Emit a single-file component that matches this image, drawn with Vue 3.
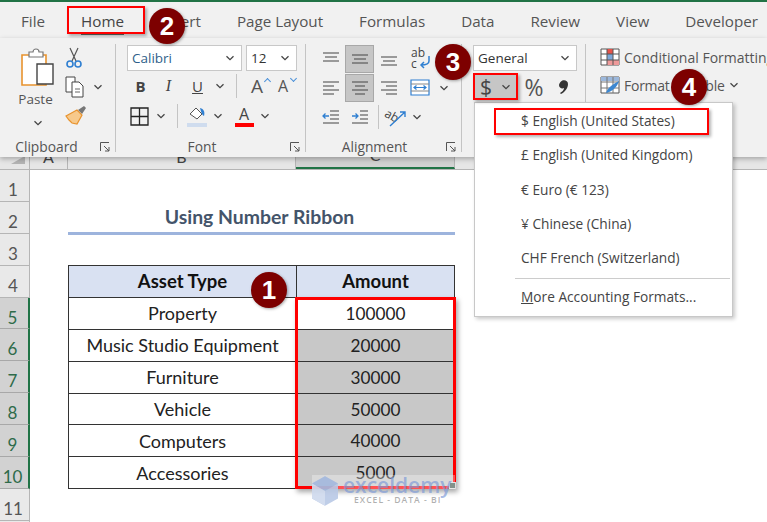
<script setup>
const tabs = ['File', 'Home', 'Insert', 'Page Layout', 'Formulas', 'Data', 'Review', 'View', 'Developer']
const rowNumbers = [1, 2, 3, 4, 5, 6, 7, 8, 9, 10, 11, 12]
const assets = [
  { type: 'Property', amount: 100000 },
  { type: 'Music Studio Equipment', amount: 20000 },
  { type: 'Furniture', amount: 30000 },
  { type: 'Vehicle', amount: 50000 },
  { type: 'Computers', amount: 40000 },
  { type: 'Accessories', amount: 5000 }
]
const currencies = [
  '$ English (United States)',
  '£ English (United Kingdom)',
  '€ Euro (€ 123)',
  '¥ Chinese (China)',
  'CHF French (Switzerland)'
]
</script>

<template>
  <div class="page">
    <svg class="defs" width="0" height="0">
      <symbol id="chev" viewBox="0 0 10 6">
        <path d="M1.5 1.2 5 4.6 8.5 1.2" fill="none" stroke="#444" stroke-width="1.3" />
      </symbol>
      <symbol id="launch" viewBox="0 0 10 10">
        <path d="M.5 9V.5H9M4 4l5 5M9 5v4H5" fill="none" stroke="#555" stroke-width="1" />
      </symbol>
    </svg>

    <div class="tabs">
      <div v-for="tab in tabs" :key="tab" class="tab" :class="{ active: tab === 'Home' }">{{ tab }}</div>
    </div>

    <div class="ribbon">
      <!-- clipboard -->
      <div class="group clipboard">
        <div class="group_body clip_body">
          <div class="paste">
            <svg width="36" height="40" viewBox="0 0 36 40">
              <path d="M2 8h24v30H2z" fill="#fff" stroke="#e8932e" stroke-width="1.6" />
              <path d="M9 9V5h4a3 3 0 0 1 6 0h4v5H9z" fill="#fff" stroke="#777" stroke-width="1.2" />
              <path d="M17 17h16v20H17z" fill="#fff" stroke="#444" stroke-width="1.4" />
            </svg>
            <div class="paste_text">Paste</div>
            <svg class="chev" width="10" height="6"><use href="#chev" /></svg>
          </div>
          <div class="clip_tools">
            <svg width="18" height="22" viewBox="0 0 18 22">
              <path d="M5 1l6 13M13 1L7 14" stroke="#555" stroke-width="1.2" fill="none" />
              <circle cx="5" cy="17" r="3" fill="none" stroke="#2f7fd1" stroke-width="1.6" />
              <circle cx="13" cy="17" r="3" fill="none" stroke="#2f7fd1" stroke-width="1.6" />
            </svg>
            <div class="tool_row">
              <svg width="22" height="22" viewBox="0 0 22 22">
                <path d="M1 1h9v15H1z" fill="#fff" stroke="#444" />
                <path d="M7 6h7l4 4v11H7z" fill="#fff" stroke="#444" />
                <path d="M10 13h5M10 16h5" stroke="#666" />
              </svg>
              <svg class="chev" width="10" height="6"><use href="#chev" /></svg>
            </div>
            <svg width="22" height="20" viewBox="0 0 22 20">
              <path d="M13 5l4 4 4-6-2-2z" fill="#777" />
              <path d="M1 11l11-6 5 5-5 9-5-1-3-3z" fill="#f7c98b" stroke="#e8932e" stroke-width="1.2" />
            </svg>
          </div>
        </div>
        <div class="group_label">
          <span>Clipboard</span>
          <svg class="launch" width="10" height="10"><use href="#launch" /></svg>
        </div>
      </div>

      <!-- font -->
      <div class="group font">
        <div class="group_body">
          <div class="select_row">
            <div class="select font_name"><span>Calibri</span><svg width="10" height="6"><use href="#chev" /></svg></div>
            <div class="select font_size"><span>12</span><svg width="10" height="6"><use href="#chev" /></svg></div>
          </div>
          <div class="font_row">
            <div class="cell w27 bold_b">B</div>
            <div class="cell w29 ital_i">I</div>
            <div class="cell w29 under_u">U</div>
            <div class="cell w16"><svg width="10" height="6"><use href="#chev" /></svg></div>
            <div class="cell w16"><span class="vsep"></span></div>
            <div class="cell w26 grow_a">A<i class="caret up"></i></div>
            <div class="cell w26 grow_a small_a">A<i class="caret down"></i></div>
          </div>
          <div class="font_row">
            <div class="cell w25">
              <svg width="19" height="19" viewBox="0 0 19 19">
                <path d="M1 1h17v17H1zM9.5 1v17M1 9.5h17" fill="none" stroke="#222" stroke-width="1.3" />
              </svg>
            </div>
            <div class="cell w18"><svg width="10" height="6"><use href="#chev" /></svg></div>
            <div class="cell w14"><span class="vsep"></span></div>
            <div class="cell w26">
              <svg width="21" height="21" viewBox="0 0 21 21">
                <path d="M3 8l6-6 6 6-5 5z" fill="#fff" stroke="#555" />
                <path d="M13 2c4 1 5 4 4 8-2-1-3-4-4-8z" fill="#2f7fd1" />
                <path d="M0 17h20v4H0z" fill="#cfdcee" />
              </svg>
            </div>
            <div class="cell w16"><svg width="10" height="6"><use href="#chev" /></svg></div>
            <div class="cell w6"></div>
            <div class="cell w24 color_a">A</div>
            <div class="cell w18"><svg width="10" height="6"><use href="#chev" /></svg></div>
          </div>
        </div>
        <div class="group_label">
          <span>Font</span>
          <svg class="launch" width="10" height="10"><use href="#launch" /></svg>
        </div>
      </div>

      <!-- alignment -->
      <div class="group alignment">
        <div class="group_body">
          <div class="align_row">
            <div class="acell"><svg width="18" height="14" viewBox="0 0 18 14"><path d="M1 1h16M3 5h12M1 9h16" stroke="#444" stroke-width="1.2" /></svg></div>
            <div class="acell on"><svg width="18" height="14" viewBox="0 0 18 14"><path d="M1 3h16M3 7h12M1 11h16" stroke="#444" stroke-width="1.2" /></svg></div>
            <div class="acell"><svg width="18" height="14" viewBox="0 0 18 14"><path d="M1 5h16M3 9h12M1 13h16" stroke="#444" stroke-width="1.2" /></svg></div>
            <div class="acell wide">
              <svg width="24" height="24" viewBox="0 0 24 24">
                <text x="3" y="10" class="svg_txt">ab</text>
                <text x="3" y="21" class="svg_txt">c</text>
                <path d="M21 9v5c0 3-3 4-8 4m3-3-3 3 3 3" fill="none" stroke="#2f7fd1" stroke-width="1.5" />
              </svg>
            </div>
          </div>
          <div class="align_row">
            <div class="acell"><svg width="18" height="16" viewBox="0 0 18 16"><path d="M1 2h16M1 6h11M1 10h16M1 14h11" stroke="#444" stroke-width="1.2" /></svg></div>
            <div class="acell on"><svg width="18" height="16" viewBox="0 0 18 16"><path d="M1 2h16M4 6h10M1 10h16M4 14h10" stroke="#444" stroke-width="1.2" /></svg></div>
            <div class="acell"><svg width="18" height="16" viewBox="0 0 18 16"><path d="M1 2h16M6 6h11M1 10h16M6 14h11" stroke="#444" stroke-width="1.2" /></svg></div>
            <div class="acell wide">
              <svg width="20" height="17" viewBox="0 0 20 17">
                <path d="M1 1h18v15H1z" fill="#fff" stroke="#2f7fd1" stroke-width="1.2" />
                <path d="M1 5h18M1 12h18" stroke="#888" />
                <path d="M4 8.5h12M6.500 6.500l-2.500 2 2.500 2M13.500 6.500l2.500 2-2.500 2" fill="none" stroke="#2f7fd1" stroke-width="1.2" />
              </svg>
            </div>
            <svg width="10" height="6"><use href="#chev" /></svg>
          </div>
          <div class="align_row">
            <div class="acell"><svg width="18" height="14" viewBox="0 0 18 14"><path d="M8 1h9M8 5h9M8 9h9M1 13h16" stroke="#444" stroke-width="1.1" /><path d="M1 6h6M3.5 3.5 1 6l2.5 2.5" fill="none" stroke="#2f7fd1" stroke-width="1.3" /></svg></div>
            <div class="acell"><svg width="18" height="14" viewBox="0 0 18 14"><path d="M9 1h8M9 5h8M9 9h8M1 13h16" stroke="#444" stroke-width="1.1" /><path d="M1 6h6M4.500 3.500 7 6 4.500 8.500" fill="none" stroke="#2f7fd1" stroke-width="1.3" /></svg></div>
            <div class="acell narrow"><span class="vsep"></span></div>
            <div class="acell orient">
              <svg width="24" height="20" viewBox="0 0 24 20">
                <text x="1" y="12" class="svg_txt" transform="rotate(30 6 8)">ab</text>
                <path d="M6 19 21 5m-5 0h5v5" fill="none" stroke="#2f7fd1" stroke-width="1.4" />
              </svg>
            </div>
            <svg width="10" height="6"><use href="#chev" /></svg>
          </div>
        </div>
        <div class="group_label">
          <span>Alignment</span>
          <svg class="launch" width="10" height="10"><use href="#launch" /></svg>
        </div>
      </div>

      <!-- number -->
      <div class="group number">
        <div class="group_body">
          <div class="select_row">
            <div class="select general"><span>General</span><svg width="10" height="6"><use href="#chev" /></svg></div>
          </div>
          <div class="number_row">
            <div class="dollar"><span>$</span><svg width="10" height="6"><use href="#chev" /></svg></div>
            <div class="percent">%</div>
            <svg class="comma" width="12" height="16" viewBox="0 0 12 16">
              <path d="M3 2.5C5 .5 10 1 10 5c0 4-3 8-7 10l-1-1c2-1 4-3 4-5-2 1-5 0-5-3 0-1 1-2.500 2-3.500z" fill="#333" />
            </svg>
          </div>
        </div>
      </div>

      <!-- styles -->
      <div class="group styles">
        <div class="style_row">
          <svg width="20" height="18" viewBox="0 0 20 18">
            <path d="M1 1h18v16H1z" fill="#fff" stroke="#555" />
            <path d="M7 1h6v5H7z" fill="#e5534b" /><path d="M7 12h12v5H7z" fill="#ee9a9a" /><path d="M7 6h6v6H7z" fill="#7da7d9" />
            <path d="M7 1v16M13 1v16M1 6h18M1 12h18" stroke="#555" fill="none" />
          </svg>
          <span>Conditional Formatting</span>
        </div>
        <div class="style_row table_row">
          <svg width="20" height="18" viewBox="0 0 20 18">
            <path d="M1 1h18v16H1z" fill="#fff" stroke="#555" />
            <path d="M1 1h18v4H1z" fill="#9cb8dc" />
            <path d="M7 1v16M13 1v16M1 6h18M1 12h18" stroke="#777" fill="none" />
            <path d="M6 17c1-4 5-8 13-12-2 6-6 10-13 12z" fill="#3c87d1" />
          </svg>
          <span>Format as Table</span>
          <svg width="10" height="6"><use href="#chev" /></svg>
        </div>
      </div>
    </div>

    <div class="col_head">
      <div class="corner"><i></i></div>
      <div class="col col_a"><span>A</span></div>
      <div class="col col_b"><span>B</span></div>
      <div class="col col_c"><span>C</span></div>
      <div class="col col_rest"></div>
    </div>

    <div class="sheet">
      <div class="row_heads">
        <div
          v-for="n in rowNumbers"
          :key="n"
          class="row_head"
          :class="{ selected: n >= 5 && n <= 10 }"
        >{{ n }}</div>
      </div>
      <div class="content">
        <div class="sheet_title">Using Number Ribbon</div>
        <table class="assets">
          <thead>
            <tr>
              <th class="type_col">Asset Type</th>
              <th>Amount</th>
            </tr>
          </thead>
          <tbody>
            <tr v-for="(asset, i) in assets" :key="asset.type">
              <td>{{ asset.type }}</td>
              <td class="amount" :class="{ shaded: i > 0 }">{{ asset.amount }}</td>
            </tr>
          </tbody>
        </table>
      </div>
    </div>

    <!-- overlays -->
    <div class="range"><i class="handle"></i></div>

    <div class="watermark">
      <svg class="wm_logo" width="28" height="32" viewBox="0 0 28 32">
        <path d="M14 0 28 8v16l-14 8L0 24V8z" fill="#b9c9e6" />
        <path d="M14 0 28 8 14 16 0 8z" fill="#a3b8de" />
        <path d="M14 16v16L0 24V8z" fill="#cfdaee" />
      </svg>
      <div class="wm_text">
        <div class="wm_name">exceldemy</div>
        <div class="wm_sub">EXCEL - DATA - BI</div>
      </div>
    </div>

    <div class="menu">
      <div v-for="c in currencies" :key="c" class="menu_item">{{ c }}</div>
      <div class="menu_sep"></div>
      <div class="menu_item more"><u>M</u>ore Accounting Formats...</div>
    </div>

    <div class="mark mark_home"></div>
    <div class="mark mark_dollar"></div>
    <div class="mark mark_item"></div>

    <div class="badge b1">1</div>
    <div class="badge b2">2</div>
    <div class="badge b3">3</div>
    <div class="badge b4">4</div>
  </div>
</template>

<style>
html, body {
  margin: 0;
  background: #fff;
}
</style>

<style scoped>
.page {
  position: relative;
  width: 767px;
  height: 522px;
  overflow: hidden;
  background: #fff;
  font-family: "Open Sans", "Noto Sans", sans-serif;
  color: #444;
}
.defs {
  position: absolute;
}
.tabs {
  display: flex;
  align-items: center;
  gap: 36px;
  box-sizing: border-box;
  height: 38px;
  padding: 2px 0 0 21px;
  background: #f1f1f1;
  border-top: 2px solid #217346;
  font-size: 15.2px;
  color: #555;
}
.tab.active {
  position: relative;
  color: #444;
  font-weight: 500;
}
.tab.active::after {
  content: '';
  position: absolute;
  left: 0;
  right: 0;
  bottom: -4px;
  height: 3px;
  background: #5f6b64;
}
.ribbon {
  position: relative;
  z-index: 1;
  display: flex;
  height: 119px;
  background: #f1f1f1;
  box-shadow: 0 2px 5px rgba(0, 0, 0, .28);
  font-size: 13px;
}
.group {
  position: relative;
  box-sizing: border-box;
  display: flex;
  flex-direction: column;
  justify-content: space-between;
  flex: none;
  margin: 6px 0 5px;
  border-right: 1px solid #c4c4c4;
}
.group_body {
  display: flex;
  flex-direction: column;
}
.group_label {
  position: relative;
  margin-bottom: -4px;
  text-align: center;
  font-size: 13.8px;
  line-height: 18px;
  color: #555;
}
.launch {
  position: absolute;
  right: 5px;
  top: 4px;
}
.clipboard {
  width: 116px;
}
.clipboard .group_label {
  padding-right: 22px;
}
.font .group_label {
  padding-right: 28px;
}
.alignment .group_label {
  padding-right: 28px;
}
.clip_body {
  flex-direction: row;
  padding: 3px 0 0 20px;
}
.paste {
  display: flex;
  flex-direction: column;
  align-items: center;
  width: 36px;
}
.paste_text {
  margin: 2px 5px 0 0;
  font-size: 13.5px;
  color: #555;
  line-height: 20px;
}
.paste .chev {
  margin-top: 11px;
}
.clip_tools {
  display: flex;
  flex-direction: column;
  align-items: flex-start;
  gap: 7px;
  margin-left: 9px;
}
.tool_row {
  display: flex;
  align-items: center;
  gap: 6px;
}
.font {
  width: 190px;
  padding-left: 11px;
}
.select_row {
  display: flex;
  gap: 4px;
  margin-top: 1px;
}
.select {
  display: flex;
  align-items: center;
  justify-content: space-between;
  box-sizing: border-box;
  height: 26px;
  padding: 0 6px 0 4px;
  background: #fff;
  border: 1px solid #c8c8c8;
  color: #333;
}
.font_name {
  width: 115px;
  font-size: 13.5px;
  color: #2f5f8a;
}
.font_size {
  width: 51px;
  font-size: 13.5px;
}
.font_row {
  display: flex;
  align-items: center;
  height: 30px;
}
.cell {
  display: flex;
  align-items: center;
  justify-content: center;
  height: 100%;
  flex: none;
}
.w6 { width: 6px; }
.w14 { width: 14px; }
.w16 { width: 16px; }
.w18 { width: 18px; }
.w24 { width: 24px; }
.w25 { width: 25px; }
.w26 { width: 26px; }
.w27 { width: 27px; }
.w29 { width: 29px; }
.vsep {
  display: block;
  width: 1px;
  height: 24px;
  background: #c4c4c4;
}
.bold_b {
  font-size: 15px;
  font-weight: 700;
  color: #444;
}
.ital_i {
  font-family: "Liberation Serif", serif;
  font-size: 16px;
  font-style: italic;
  color: #444;
}
.under_u {
  font-size: 15px;
  text-decoration: underline;
  color: #444;
}
.grow_a {
  position: relative;
  font-size: 19px;
  color: #555;
}
.small_a {
  font-size: 16px;
}
.caret {
  position: absolute;
  right: 0;
  top: 8px;
  width: 4px;
  height: 4px;
  border-top: 1.5px solid #4a90d9;
  border-left: 1.5px solid #4a90d9;
  transform: rotate(45deg);
}
.caret.down {
  top: 5px;
  transform: rotate(225deg);
}
.color_a {
  flex-direction: column;
  font-size: 16px;
  line-height: 17px;
}
.color_a::after {
  content: '';
  width: 19px;
  height: 4px;
  background: #f00;
}
.alignment {
  width: 156px;
  padding-left: 10px;
}
.align_row {
  display: flex;
  align-items: center;
  height: 29px;
}
.acell {
  display: flex;
  align-items: center;
  justify-content: center;
  box-sizing: border-box;
  flex: none;
  width: 29px;
  height: 28px;
}
.acell.on {
  background: #c6c6c6;
  border: 1px solid #a8a8a8;
}
.acell.narrow {
  width: 9px;
}
.acell.orient {
  width: 26px;
}
.acell.wide {
  width: 33px;
}
.svg_txt {
  font-family: "Open Sans", sans-serif;
  font-size: 12px;
  fill: #444;
}
.align_row > svg {
  margin-left: 3px;
}
.number {
  width: 124px;
  padding-left: 11px;
}
.general {
  width: 104px;
  font-size: 13.5px;
}
.number_row {
  display: flex;
  align-items: center;
  height: 27px;
  margin-top: 2px;
}
.dollar {
  display: flex;
  align-items: center;
  justify-content: space-between;
  box-sizing: border-box;
  width: 44px;
  height: 26px;
  padding: 0 6px 0 7px;
  background: #c6c6c6;
  font-size: 21px;
  color: #444;
}
.percent {
  font-size: 23px;
  width: 34px;
  text-align: center;
  color: #555;
}
.comma {
  margin-left: 7px;
}
.styles {
  flex: 1;
  margin-top: 6px;
  padding-left: 14px;
  border: none;
  justify-content: flex-start;
}
.style_row {
  display: flex;
  align-items: center;
  gap: 4px;
  height: 26px;
  font-size: 14px;
  white-space: nowrap;
  color: #555;
}
.style_row + .style_row {
  margin-top: 2px;
}
.table_row {
  letter-spacing: -.25px;
}
.col_head {
  display: flex;
  height: 13px;
  background: #e6e6e6;
  border-bottom: 1px solid #b5b5b5;
  box-sizing: border-box;
  font-family: Lato, sans-serif;
  font-size: 16px;
  color: #444;
}
.corner {
  position: relative;
  width: 30px;
  border-right: 1px solid #b5b5b5;
  box-sizing: border-box;
}
.corner i {
  position: absolute;
  right: 4px;
  bottom: 5px;
  border-style: solid;
  border-width: 0 0 8px 14px;
  border-color: transparent transparent #b5b5b5 transparent;
}
.col {
  display: flex;
  justify-content: center;
  align-items: flex-end;
  overflow: hidden;
  box-sizing: border-box;
  border-right: 1px solid #b5b5b5;
}
.col span {
  line-height: 16px;
  margin-bottom: 4px;
}
.col_a { width: 38px; }
.col_b { width: 228px; }
.col_c {
  width: 159px;
  background: #d2d2d2;
  border-bottom: 2px solid #217346;
}
.col_rest {
  flex: 1;
  border: none;
}
.sheet {
  display: flex;
  height: 352px;
  font-family: Lato, sans-serif;
}
.row_heads {
  flex: none;
  width: 30px;
}
.row_head {
  box-sizing: border-box;
  height: 31.9px;
  padding: 5px 3px 0 0;
  text-align: center;
  font-size: 17px;
  line-height: 30px;
  color: #555;
  background: #e9e9e9;
  border-right: 1px solid #b5b5b5;
  border-bottom: 1px solid #b5b5b5;
}
.row_head.selected {
  background: #d2d2d2;
  color: #2e6b4a;
  border-right: 2px solid #217346;
  border-bottom-color: #a8a8a8;
}
.content {
  flex: none;
  width: 387px;
  margin-left: 38px;
}
.sheet_title {
  box-sizing: border-box;
  height: 65px;
  padding: 34px 4px 0 0;
  text-align: center;
  font-size: 19.4px;
  line-height: 26px;
  font-weight: 700;
  color: #44546a;
  border-bottom: 3px solid #9db4dd;
}
.assets {
  width: 387px;
  margin-top: 30px;
  border-collapse: collapse;
  table-layout: fixed;
  font-size: 18px;
  color: #222;
}
.assets th,
.assets td {
  box-sizing: border-box;
  height: 31.9px;
  padding: 0;
  text-align: center;
  border: 1.5px solid #333;
}
.assets th {
  background: #d9e1f2;
  color: #111;
  font-size: 18.5px;
  font-weight: 700;
}
.assets td.amount {
  font-size: 17.2px;
}
.type_col {
  width: 228px;
}
.assets td.shaded {
  background: #c8c8c8;
}
.range {
  position: absolute;
  left: 295px;
  top: 297px;
  box-sizing: border-box;
  width: 161px;
  height: 192px;
  border: 3px solid #f00;
  box-shadow: 2px 3px 5px rgba(0, 0, 0, .35);
}
.handle {
  position: absolute;
  right: -3px;
  bottom: -3px;
  width: 5px;
  height: 5px;
  background: #4a5f55;
  border: 1px solid #ddd;
}
.watermark {
  position: absolute;
  left: 312px;
  top: 475px;
  display: flex;
  gap: 5px;
  width: 143px;
  height: 14px;
  background: rgba(255, 255, 255, .32);
}
.wm_logo {
  flex: none;
  width: 26px;
  opacity: .9;
}
.wm_text {
  flex: none;
}
.wm_name {
  font-size: 21px;
  line-height: 21px;
  font-weight: 600;
  color: rgba(120, 150, 215, .65);
}
.wm_sub {
  margin: 0 0 0 11px;
  font-size: 8.6px;
  line-height: 9px;
  font-weight: 600;
  letter-spacing: 1px;
  white-space: nowrap;
  color: rgba(150, 150, 150, .75);
}
.menu {
  position: absolute;
  z-index: 2;
  left: 474px;
  top: 102px;
  box-sizing: border-box;
  width: 259px;
  height: 215px;
  padding-top: 1px;
  background: #fff;
  border: 1px solid #c8c8c8;
  box-shadow: 2px 2px 4px rgba(0, 0, 0, .22);
}
.menu_item {
  height: 34.3px;
  padding-left: 46px;
  font-size: 13.7px;
  line-height: 34px;
  color: #444;
}
.menu_sep {
  height: 1px;
  margin: 3px 2px 0 40px;
  background: #ccc;
}
.menu_item.more {
  margin-top: 1px;
}
.mark {
  position: absolute;
  z-index: 3;
  box-sizing: border-box;
  border: 2.5px solid #f00;
  box-shadow: 2px 2px 3px rgba(0, 0, 0, .3);
}
.mark_home {
  left: 67px;
  top: 6px;
  width: 78px;
  height: 28px;
}
.mark_dollar {
  left: 473px;
  top: 73px;
  width: 45px;
  height: 27px;
}
.mark_item {
  left: 494px;
  top: 108px;
  width: 215px;
  height: 27px;
}
.badge {
  position: absolute;
  z-index: 4;
  width: 36px;
  height: 36px;
  border-radius: 50%;
  background: #7d0000;
  box-shadow: 1px 1px 3px rgba(0, 0, 0, .35);
  color: #fff;
  font-family: "Liberation Sans", sans-serif;
  font-size: 26px;
  font-weight: 700;
  line-height: 36px;
  text-align: center;
}
.b1 { left: 251px; top: 272px; }
.b2 { left: 149px; top: 8px; }
.b3 { left: 435px; top: 44px; }
.b4 { left: 671px; top: 69px; }
</style>
